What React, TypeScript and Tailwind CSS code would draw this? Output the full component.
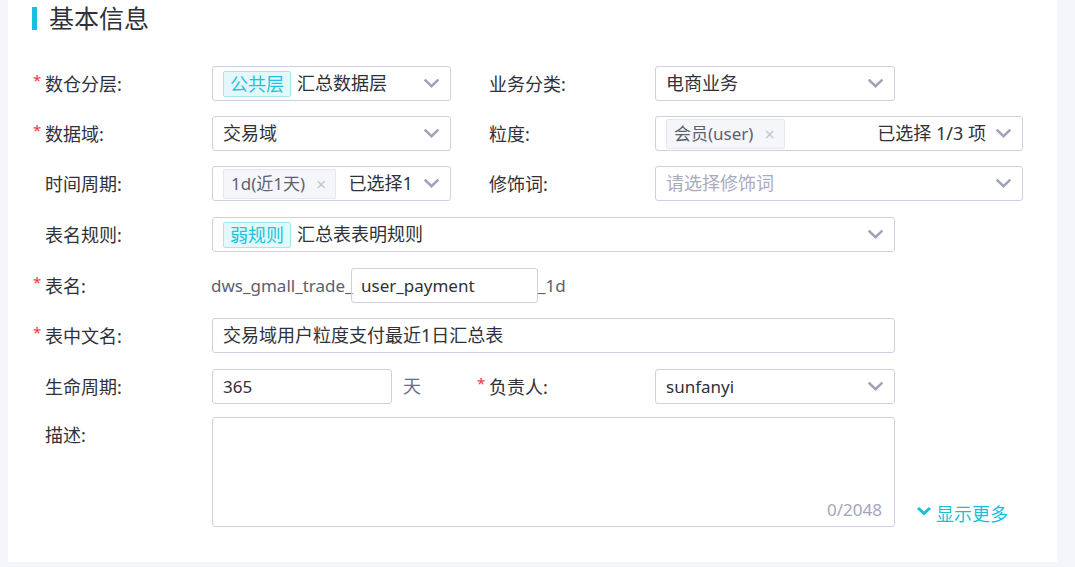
import React from "react";

const FONT = "font-['Noto_Sans','Noto_Sans_CJK_SC',sans-serif]";

function Chevron() {
  return (
    <svg width="15" height="9" viewBox="0 0 15 9" className="shrink-0">
      <path d="M1.5 1.5 L7.5 7.2 L13.5 1.5" fill="none" stroke="#a1a3ba" strokeWidth="2.6" strokeLinecap="square" />
    </svg>
  );
}

function Label({ text, req, w = "w-[180px]" }: { text: string; req?: boolean; w?: string }) {
  return (
    <div className={`${w} shrink-0 flex items-center h-[35px]`}>
      <span className="w-[13px] shrink-0 text-[#f5313e] text-[15px] leading-none -mt-[7px] pl-[1px]">{req ? "*" : ""}</span>
      <span className="text-[18px] text-[#2f3138] leading-none">{text}</span>
    </div>
  );
}

function Box({ w, children, chevron = true }: { w: string; children?: React.ReactNode; chevron?: boolean }) {
  return (
    <div className={`${w} shrink-0 h-[35px] border border-[#cdd0e2] rounded-[3px] flex items-center pl-[10px] pr-[11px] bg-white`}>
      <div className="flex-1 min-w-0 flex items-center overflow-hidden whitespace-nowrap">{children}</div>
      {chevron && <Chevron />}
    </div>
  );
}

function CyanTag({ text }: { text: string }) {
  return (
    <span className="h-[26px] px-[6px] flex items-center border border-[#a4e7f1] bg-[#e4f8fb] text-[#1cc3dc] text-[18px] rounded-[2px] leading-none mr-[6px] shrink-0">
      {text}
    </span>
  );
}

function GrayTag({ text }: { text: string }) {
  return (
    <span className="h-[30px] pl-[7px] pr-[9px] flex items-center border border-[#e6e7ef] bg-[#f5f6fa] text-[#5d6070] text-[17px] rounded-[2px] leading-none shrink-0">
      {text}
      <span className="ml-[11px] text-[#c3c5d3] text-[18px]">×</span>
    </span>
  );
}

export default function App() {
  return (
    <div className={`w-[1075px] h-[567px] bg-[#f4f5f8] overflow-hidden pl-2 pr-[18px] ${FONT}`}>
      <div className="bg-white h-[562px] pl-6 pt-[7px]">
        <div className="flex items-center h-[23px]">
          <div className="w-[5px] h-[23px] bg-[#13c2dc]" />
          <div className="ml-[12px] text-[25px] text-[#2f3138] leading-none">基本信息</div>
        </div>

        {/* row 1 */}
        <div className="flex items-center mt-[36px]">
          <Label text="数仓分层:" req />
          <Box w="w-[239px]">
            <CyanTag text="公共层" />
            <span className="text-[18px] text-[#2f3138]">汇总数据层</span>
          </Box>
          <div className="w-[25px] shrink-0" />
          <Label text="业务分类:" w="w-[179px]" />
          <Box w="w-[240px]">
            <span className="text-[18px] text-[#2f3138]">电商业务</span>
          </Box>
        </div>

        {/* row 2 */}
        <div className="flex items-center mt-[15px]">
          <Label text="数据域:" req />
          <Box w="w-[239px]">
            <span className="text-[18px] text-[#2f3138]">交易域</span>
          </Box>
          <div className="w-[25px] shrink-0" />
          <Label text="粒度:" w="w-[179px]" />
          <Box w="w-[368px]">
            <GrayTag text="会员(user)" />
            <span className="flex-1" />
            <span className="text-[18px] text-[#2f3138] mr-[10px]">已选择 1/3 项</span>
          </Box>
        </div>

        {/* row 3 */}
        <div className="flex items-center mt-[15px]">
          <Label text="时间周期:" />
          <Box w="w-[239px]">
            <GrayTag text="1d(近1天)" />
            <span className="text-[18px] text-[#2f3138] ml-[12px]">已选择1</span>
          </Box>
          <div className="w-[25px] shrink-0" />
          <Label text="修饰词:" w="w-[179px]" />
          <Box w="w-[368px]">
            <span className="text-[18px] text-[#a9abbe]">请选择修饰词</span>
          </Box>
        </div>

        {/* row 4 */}
        <div className="flex items-center mt-[16px]">
          <Label text="表名规则:" />
          <Box w="w-[683px]">
            <CyanTag text="弱规则" />
            <span className="text-[18px] text-[#2f3138]">汇总表表明规则</span>
          </Box>
        </div>

        {/* row 5 */}
        <div className="flex items-center mt-[16px]">
          <Label text="表名:" req />
          <span className="w-[139px] shrink-0 whitespace-nowrap text-[17px] text-[#5d6070] -ml-[1px] mr-[1px]">dws_gmall_trade_</span>
          <div className="w-[187px] shrink-0 h-[35px] border border-[#cdd0e2] rounded-[3px] flex items-center pl-[9px] text-[17px] text-[#2f3138]">
            user_payment
          </div>
          <span className="text-[17px] text-[#5d6070]">_1d</span>
        </div>

        {/* row 6 */}
        <div className="flex items-center mt-[15px]">
          <Label text="表中文名:" req />
          <Box w="w-[683px]" chevron={false}>
            <span className="text-[18px] text-[#2f3138]">交易域用户粒度支付最近1日汇总表</span>
          </Box>
        </div>

        {/* row 7 */}
        <div className="flex items-center mt-[16px]">
          <Label text="生命周期:" />
          <Box w="w-[180px]" chevron={false}>
            <span className="text-[17px] text-[#2f3138]">365</span>
          </Box>
          <span className="ml-[11px] w-[73px] text-[18px] text-[#6a6d7c]">天</span>
          <Label text="负责人:" req w="w-[179px]" />
          <Box w="w-[240px]">
            <span className="text-[17px] text-[#2f3138]">sunfanyi</span>
          </Box>
        </div>

        {/* row 8 */}
        <div className="flex items-start mt-[13px]">
          <div className="w-[180px] shrink-0 flex items-center h-[35px]">
            <span className="w-[13px] shrink-0" />
            <span className="text-[18px] text-[#2f3138] leading-none">描述:</span>
          </div>
          <div className="w-[683px] h-[110px] border border-[#cdd0e2] rounded-[3px] flex items-end justify-end pr-[12px] pb-[4px]">
            <span className="text-[17px] text-[#a3a6ba]">0/2048</span>
          </div>
          <div className="self-end ml-[21px] -mb-[1px] flex items-center text-[#17bfd9]">
            <svg width="16" height="10" viewBox="0 0 16 10" className="mr-[4px] -mt-[8px]">
              <path d="M2 2 L8 7.5 L14 2" fill="none" stroke="#17bfd9" strokeWidth="3" />
            </svg>
            <span className="text-[18px]">显示更多</span>
          </div>
        </div>
      </div>
    </div>
  );
}
